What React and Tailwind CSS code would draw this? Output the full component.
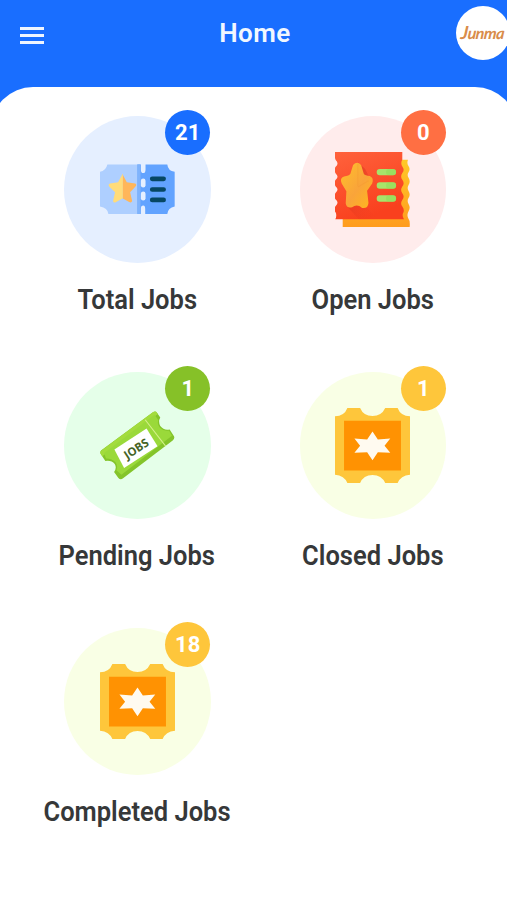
const DoubleTicket = () => (
  <svg viewBox="135 155 224 224" className="size-[75px]">
    <path d="M157 192H247V340H160Q158 322 135 318V214Q153 210 157 192Z" fill="#aecfff" />
    <path d="M247 192H257V207Q257 218 264 218Q271 218 271 207V192H336Q338 211 358 214V318Q338 322 336 340H270V325Q270 315 264 315Q257 315 257 325V340H247Z" fill="#62a3ff" />
    <path d="M246 192H256V340H246Z" fill="#7fb3fc" />
    <rect x="257" y="234" width="14" height="27" rx="7" fill="#e5efff" />
    <rect x="257" y="273" width="14" height="27" rx="7" fill="#e5efff" />
    <path d="M202 221L215 245L240 249Q246 252 241 258L225 275L231 301Q229 308 222 304L202 293Z" fill="#ffb65a" />
    <path d="M203 219L189 245L165 249Q158 252 163 259L180 275L174 301Q175 308 182 305L203 293Z" fill="#ffdc7a" />
    <path d="M291 235H325M291 267H325M291 298H325" stroke="#064764" strokeWidth="14" strokeLinecap="round" />
  </svg>
);

const WavyTicket = () => (
  <svg viewBox="136 154 224 224" className="size-[75px]">
    <defs>
      <linearGradient id="red" x1="0" y1="0" x2="0.4" y2="1">
        <stop offset="0" stopColor="#ff623c" />
        <stop offset="1" stopColor="#f9401e" />
      </linearGradient>
      <linearGradient id="gold" x1="0" y1="0" x2="0" y2="1">
        <stop offset="0" stopColor="#ffc928" />
        <stop offset="1" stopColor="#ff9c1e" />
      </linearGradient>
      <linearGradient id="star" x1="0" y1="0" x2="1" y2="1">
        <stop offset="0" stopColor="#ffc02a" />
        <stop offset="0.55" stopColor="#f9a43a" />
        <stop offset="1" stopColor="#ffb81c" />
      </linearGradient>
      <linearGradient id="shade" x1="0" y1="0" x2="1" y2="1">
        <stop offset="0" stopColor="#b82018" />
        <stop offset="1" stopColor="#f54120" stopOpacity="0" />
      </linearGradient>
    </defs>
    <path d="M159 177H354Q350 187 355 195Q362 204 356 214Q350 223 356 232Q362 242 356 252Q350 262 356 271Q362 281 356 291Q350 300 356 310Q362 320 356 330Q350 341 354 350Q361 359 359 378H159Z" fill="url(#gold)" />
    <path d="M136 154H337V177Q331 188 337 197Q345 207 337 217Q330 227 337 237Q345 247 337 257Q330 267 337 277Q345 287 337 297Q330 307 337 317Q345 327 339 337Q336 346 342 355H137Q142 344 138 335Q131 325 138 315Q149 305 138 296Q131 286 138 276Q149 266 138 257Q131 247 138 237Q149 228 138 218Q131 208 138 198Q149 188 138 178Q134 170 136 154Z" fill="url(#red)" />
    <path d="M172 317L205 185L226 205L238 228L230 318L265 355H207Z" fill="url(#shade)" opacity="0.55" />
    <path d="M190 193Q202 179 214 193L222 219Q226 225 240 226Q253 232 247 248L232 270L236 306Q234 324 217 321Q202 308 187 319Q170 323 168 307L170 271L156 248Q149 232 163 227Q178 225 182 219Z" fill="url(#star)" />
    <path d="M204 189V256M205 258L236 240" fill="none" stroke="#f3922f" strokeWidth="3" opacity="0.3" />
    <path d="M270 214H309M270 254H309M270 293H309" stroke="#a7e46a" strokeWidth="19" strokeLinecap="round" />
    <path d="M298 214H309M298 254H309M298 293H309" stroke="#8edc55" strokeWidth="19" strokeLinecap="round" opacity="0.5" />
  </svg>
);

const JobsTicket = () => (
  <svg viewBox="135 143 224 224" className="size-[75px]">
    <path d="M138 270L294 155Q301 151 305 157L315 171Q308 183 315 197Q326 211 343 207L356 227Q359 234 353 239L204 353Q196 359 190 352L177 334Q186 322 179 310Q169 298 151 301L138 282Q134 275 138 270Z" fill="#84c42a" />
    <path d="M138 271L294 155Q301 151 305 157L308 161L142 287L136 279Q135 274 138 271Z" fill="#a3dc3d" />
    <path d="M147 278L298 163L309 179Q305 191 314 202Q325 213 341 210L350 226L199 342L184 329Q189 318 182 306Q171 294 153 294Z" fill="#9ad93a" />
    <path d="M178 267L274 204L307 257L207 322Z" fill="#fff" />
    <path d="M270 178L331 257" stroke="#d6f18c" strokeWidth="3" />
    <text x="243" y="277" transform="rotate(-33 243 264)" textAnchor="middle" textLength="80" lengthAdjust="spacingAndGlyphs" className="font-['Open_Sans',sans-serif] text-[35px] font-bold" fill="#456325">JOBS</text>
  </svg>
);

const StarTicket = () => (
  <svg viewBox="136 143 224 224" className="size-[75px]">
    <path d="M173 143H211Q221 167 248 167Q275 167 286 143H323Q332 167 360 168V342Q332 344 323 367H286Q275 343 248 343Q221 343 211 367H173Q164 344 136 342V168Q164 167 173 143Z" fill="#fec63b" />
    <path d="M163 181H333V330H163Z" fill="#ff9202" />
    <path d="M248 213L264 237L301 234L284 256L301 277L264 275L248 299L232 275L194 277L211 256L194 234L232 237Z" fill="#fffaf0" />
  </svg>
);

const jobs = [
  { title: 'Total Jobs', count: 21, circle: 'bg-[#e5efff]', badge: 'bg-[#196eff]', icon: <DoubleTicket /> },
  { title: 'Open Jobs', count: 0, circle: 'bg-[#ffecec]', badge: 'bg-[#ff6f43]', icon: <WavyTicket /> },
  { title: 'Pending Jobs', count: 1, circle: 'bg-[#e5ffe9]', badge: 'bg-[#86c128]', icon: <JobsTicket /> },
  { title: 'Closed Jobs', count: 1, circle: 'bg-[#f9ffe5]', badge: 'bg-[#fec63b]', icon: <StarTicket /> },
  { title: 'Completed Jobs', count: 18, circle: 'bg-[#f9ffe5]', badge: 'bg-[#fec63b]', icon: <StarTicket /> },
];

export default function App() {
  return (
    <div className="h-[900px] w-full overflow-hidden bg-[#196eff] font-[Roboto,sans-serif]">
      {/* Header */}
      <header className="grid h-[87px] grid-cols-[1fr_auto_1fr] items-start pl-5">
        <button className="mt-[27px] flex w-6 flex-col gap-1" aria-label="Menu">
          <span className="h-[3px] w-6 bg-[#eef5ff]"></span>
          <span className="h-[3px] w-6 bg-[#eef5ff]"></span>
          <span className="h-[3px] w-6 bg-[#eef5ff]"></span>
        </button>
        <h1 className="mt-[17px] mr-[17px] text-[26px] leading-8 font-semibold tracking-[0.5px] text-[#f1f7ff]">Home</h1>
        <div className="mt-1.5 -mr-[3px] flex size-[54px] items-center justify-center justify-self-end rounded-full bg-white">
          <span className="-mt-0.5 -skew-x-6 font-[Lato,sans-serif] text-base font-bold tracking-[-0.5px] text-[#d98c4a] italic">
            <span className="text-lg">J</span>unma
          </span>
        </div>
      </header>

      {/* Job cards */}
      <main className="-mr-2.5 -ml-[9px] h-[813px] rounded-t-[42px] bg-white pt-[29px] pr-2.5 pl-[9px]">
        <div className="grid grid-cols-[235.5px_235.5px] pl-[19.5px]">
          {jobs.map((job) => (
            <div key={job.title} className="flex h-64 flex-col items-center">
              <div className={`relative flex size-[146.5px] items-center justify-center rounded-full ${job.circle}`}>
                {job.icon}
                <span className={`absolute -top-1.5 right-[0.3px] flex size-[45px] items-center justify-center rounded-full text-[22px] font-bold text-white ${job.badge}`}>
                  {job.count}
                </span>
              </div>
              <h2 className="mt-[21.5px] scale-x-[0.945] text-[27px] leading-8 font-semibold whitespace-nowrap text-[#363839]">{job.title}</h2>
            </div>
          ))}
        </div>
      </main>
    </div>
  );
}
